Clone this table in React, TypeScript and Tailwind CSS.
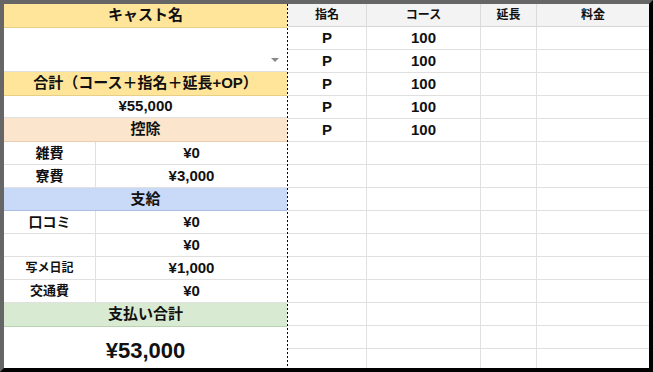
import React from "react";

const font = { fontFamily: '"Liberation Sans", Arial, "Noto Sans CJK JP", sans-serif' };

function Band({ label, cls, h = "h-[24px]" }: { label: string; cls: string; h?: string }) {
  return (
    <div className={`${h} shrink-0 ${cls} flex items-center justify-center text-[15px] font-bold text-[#111] border-b`}>
      {label}
    </div>
  );
}

function Pair({ label, value, size = "text-[14px]" }: { label: string; value: string; size?: string }) {
  return (
    <div className="h-[23px] shrink-0 flex border-b border-[#e0e0e0] font-bold text-[#111]">
      <div className={`w-[92px] flex items-center justify-center border-r border-[#e0e0e0] ${size}`}>
        {label}
      </div>
      <div className="flex-1 flex items-center justify-center text-[15px]">{value}</div>
    </div>
  );
}

export default function App() {
  const rows = Array.from({ length: 15 });
  return (
    <div
      className="w-[653px] h-[372px] bg-white border-t-4 border-l-4 border-t-[#666] border-l-[#666] border-r-4 border-b-4 border-r-black border-b-black flex overflow-hidden"
      style={font}
    >
      {/* left panel */}
      <div className="w-[283px] flex flex-col">
        <Band label="キャスト名" cls="bg-[#ffe599] border-[#e8cf87]" />
        <div className="h-[44px] shrink-0 relative border-b border-[#e0e0e0]">
          <div className="absolute right-[8px] top-[30px] w-0 h-0 border-l-[4px] border-r-[4px] border-t-[4px] border-l-transparent border-r-transparent border-t-[#888]" />
        </div>
        <Band label="合計（コース＋指名＋延長+OP）" cls="bg-[#ffe599] border-[#e8cf87]" />
        <div className="h-[22px] shrink-0 flex items-center justify-center text-[15px] font-bold text-[#111] border-b border-[#e0e0e0]">
          ¥55,000
        </div>
        <Band label="控除" cls="bg-[#fce5cd] border-[#e8cdb0]" />
        <Pair label="雑費" value="¥0" />
        <Pair label="寮費" value="¥3,000" />
        <Band label="支給" h="h-[23px]" cls="bg-[#c9daf8] border-[#a9bde0]" />
        <Pair label="口コミ" value="¥0" />
        <Pair label="" value="¥0" />
        <Pair label="写メ日記" value="¥1,000" size="text-[12px]" />
        <Pair label="交通費" value="¥0" size="text-[13px]" />
        <Band label="支払い合計" cls="bg-[#d9ead3] border-[#b9d2b0]" />
        <div className="flex-1 flex items-center justify-center pt-[5px] text-[22px] font-bold text-[#111]">
          ¥53,000
        </div>
      </div>
      {/* dashed divider */}
      <div className="w-[1px] shrink-0 bg-[repeating-linear-gradient(to_bottom,#000_0_2px,transparent_2px_4px)]" />
      {/* right grid */}
      <div className="flex-1 flex flex-col">
        <div className="h-[23px] shrink-0 flex bg-[#f3f3f3] border-b border-[#d6d6d6] text-[12px] font-bold text-[#111]">
          <div className="w-[79px] flex items-center justify-center border-r border-[#dcdcdc]">指名</div>
          <div className="w-[114px] flex items-center justify-center border-r border-[#dcdcdc]">コース</div>
          <div className="w-[56px] flex items-center justify-center border-r border-[#dcdcdc]">延長</div>
          <div className="flex-1 flex items-center justify-center">料金</div>
        </div>
        {rows.map((_, i) => (
          <div key={i} className="h-[23px] shrink-0 flex border-b border-[#e0e0e0] text-[15px] font-bold text-[#111]">
            <div className="w-[79px] flex items-center justify-center border-r border-[#e0e0e0]">{i < 5 ? "P" : ""}</div>
            <div className="w-[114px] flex items-center justify-center border-r border-[#e0e0e0]">{i < 5 ? "100" : ""}</div>
            <div className="w-[56px] border-r border-[#e0e0e0]" />
            <div className="flex-1" />
          </div>
        ))}
      </div>
    </div>
  );
}
